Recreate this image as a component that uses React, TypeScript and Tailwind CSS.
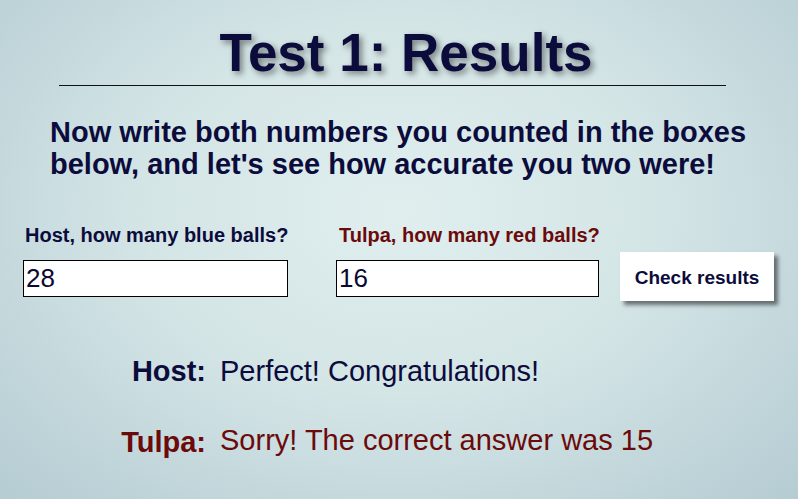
import { useState } from "react";

const navy = "text-[#0c0c3c]";
const maroon = "text-[#6b0a0a]";

function App() {
  const [host, setHost] = useState("28");
  const [tulpa, setTulpa] = useState("16");

  return (
    <div className="min-h-screen h-[499px] overflow-hidden bg-[radial-gradient(ellipse_at_50%_42%,#e0eeee_0%,#d4e5e6_45%,#b5ccd3_100%)] font-['Liberation_Sans',Arial,sans-serif]">
      <h1
        className={`pt-[28px] pl-[14px] text-center text-[53px] leading-[50px] font-bold ${navy} [text-shadow:3px_3px_6px_rgba(0,0,0,0.45)]`}
      >
        Test 1: Results
      </h1>

      <div className="mt-[7px] ml-[59px] w-[667px] border-t border-[#111]" />

      <p
        className={`mt-[30px] ml-[50px] w-[720px] text-[29px] leading-[32px] font-bold ${navy}`}
      >
        Now write both numbers you counted in the boxes below, and let's see
        how accurate you two were!
      </p>

      <div className="mt-[43px] flex items-start">
        <label className="ml-[23px] flex w-[265px] flex-col">
          <span
            className={`pl-[2px] whitespace-nowrap text-[20px] leading-[24px] font-bold ${navy}`}
          >
            Host, how many blue balls?
          </span>
          <input
            value={host}
            onChange={(event) => setHost(event.target.value)}
            className="mt-[13px] h-[37px] w-full border border-black bg-white px-[2px] text-[26px] text-[#0a0a30] outline-none"
          />
        </label>

        <label className="ml-[48px] flex w-[263px] flex-col">
          <span
            className={`pl-[3px] whitespace-nowrap text-[20px] leading-[24px] font-bold ${maroon}`}
          >
            Tulpa, how many red balls?
          </span>
          <input
            value={tulpa}
            onChange={(event) => setTulpa(event.target.value)}
            className="mt-[13px] h-[37px] w-full border border-black bg-white px-[2px] text-[26px] text-[#0a0a30] outline-none"
          />
        </label>

        <button
          type="button"
          className={`mt-[29px] ml-[21px] h-[49px] w-[154px] bg-white pt-[4px] text-[19px] font-bold ${navy} shadow-[4px_4px_4px_rgba(0,0,0,0.5)]`}
        >
          Check results
        </button>
      </div>

      <div className="mt-[54px] grid grid-cols-[206px_1fr] gap-x-[14px] gap-y-[37px] text-[29px] leading-[32px]">
        <span className={`text-right font-bold ${navy}`}>Host:</span>
        <span className={navy}>Perfect! Congratulations!</span>

        <span className={`pt-[2px] text-right font-bold ${maroon}`}>Tulpa:</span>
        <span className={maroon}>Sorry! The correct answer was 15</span>
      </div>
    </div>
  );
}

export default App;
